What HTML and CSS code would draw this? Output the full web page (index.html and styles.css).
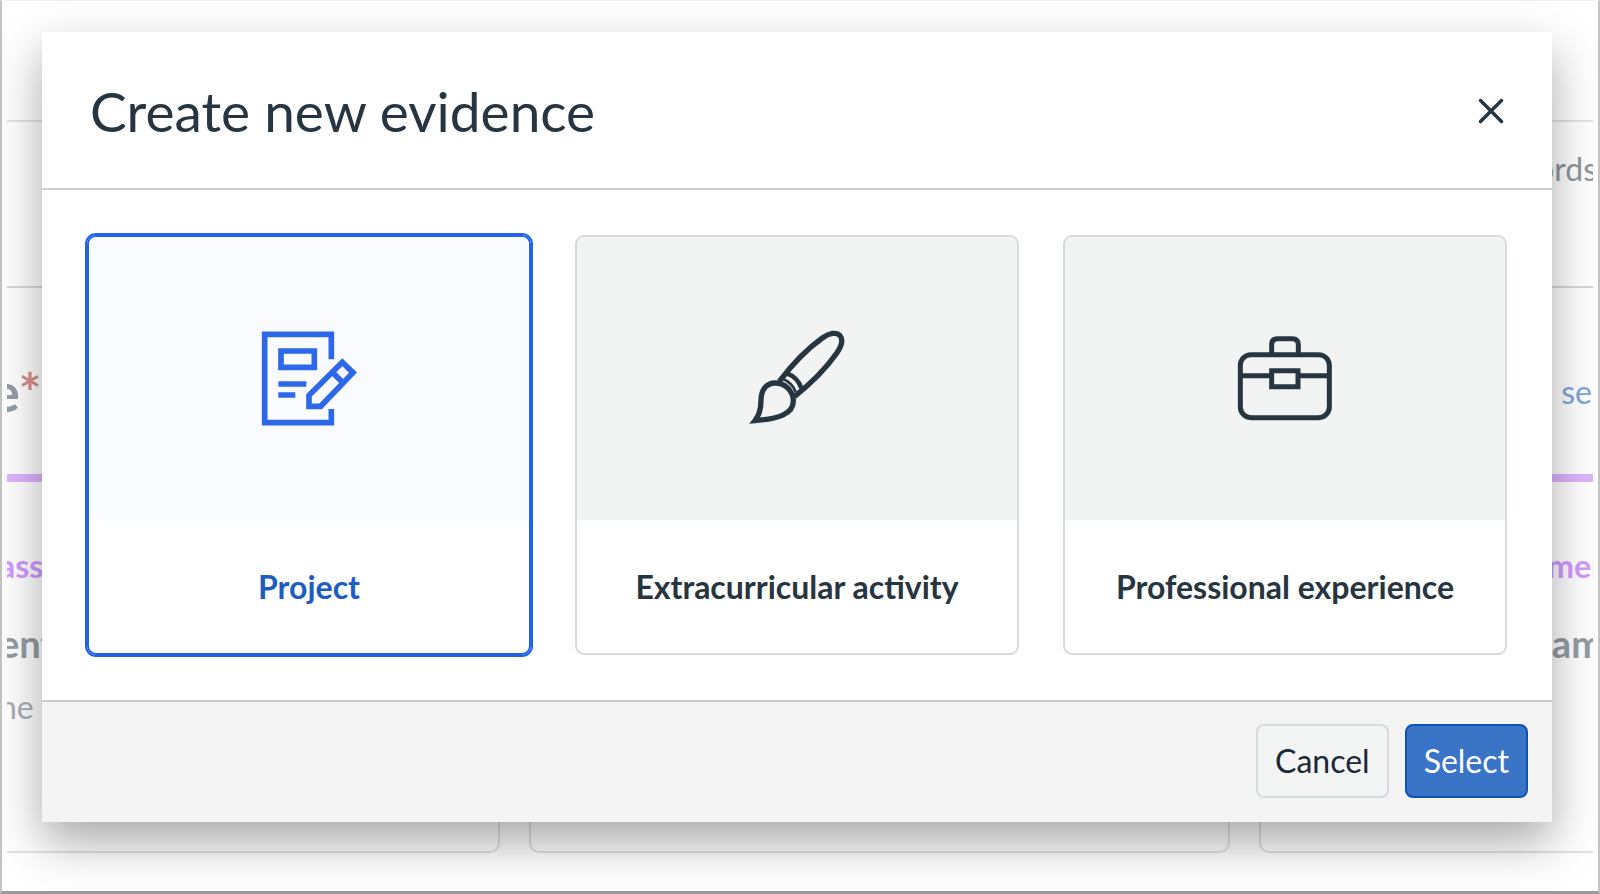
FILE: index.html
```
<!DOCTYPE html>
<html lang="en">
<head>
  <meta charset="UTF-8">
  <meta name="viewport" content="width=device-width, initial-scale=1.0">
  <title>Create new evidence</title>
  <link rel="stylesheet" href="styles.css">
</head>
<body>
  <div class="frame">
    <div class="page" aria-hidden="true">
      <div class="topbar"></div>
      <div class="toolbar">
        <span class="page-text">ords</span>
      </div>
      <div class="page-title">
        <span class="page-heading">e<span class="required">*</span></span>
        <span class="page-link">se</span>
      </div>
      <div class="page-cards">
        <div class="page-card first">
          <span class="tag">ass</span>
          <span class="name">ent</span>
          <span class="note">ne</span>
        </div>
        <div class="page-card"></div>
        <div class="page-card last">
          <span class="tag">mer</span>
          <span class="name">am</span>
        </div>
      </div>
    </div>
  </div>

  <div class="overlay">
    <form class="modal" role="dialog" aria-labelledby="modal-title">
      <header class="modal-header">
        <h1 id="modal-title">Create new evidence</h1>
        <button type="button" class="close" aria-label="Close">
          <svg viewBox="0 0 56 56"><path d="M7 7l42 42M49 7L7 49"/></svg>
        </button>
      </header>

      <div class="options">
        <input type="radio" name="evidence" id="project" checked>
        <label class="option" for="project">
          <span class="option-icon">
            <svg viewBox="59 56 300 300">
              <g stroke-width="17">
                <path d="M276 147V72H76v265h200v-41"/>
                <path d="M125 122h100v49H125zM117 221h84M117 254h51"/>
                <path d="M309 156l32 31-97 101h-35v-33zM279 186l32 31"/>
              </g>
            </svg>
          </span>
          <span class="option-name">Project</span>
        </label>

        <input type="radio" name="evidence" id="activity">
        <label class="option" for="activity">
          <span class="option-icon">
            <svg viewBox="51 56 300 300">
              <g stroke-width="16">
                <path d="M148 213C190 158 235 113 277 83C298 68 319 64 330 76C340 88 335 107 320 129C288 174 240 222 194 258"/>
                <path d="M172 190c20 7 34 21 42 43" stroke-width="14"/>
                <path d="M160 206c16 7 30 20 37 39" stroke-width="8"/>
                <path d="M75 331c14-18 18-35 18-61c0-32 17-52 42-52c30 0 55 23 55 54c0 40-46 53-115 59z"/>
              </g>
            </svg>
          </span>
          <span class="option-name">Extracurricular activity</span>
        </label>

        <input type="radio" name="evidence" id="experience">
        <label class="option" for="experience">
          <span class="option-icon">
            <svg viewBox="59 56 300 300">
              <g stroke-width="15">
                <rect x="75" y="133" width="267" height="189" rx="32"/>
                <path d="M169 133v-30q0-18 18-18h44q18 0 18 18v30"/>
                <path d="M74 196h95M249 196h93M169 181h79v48h-79z"/>
              </g>
            </svg>
          </span>
          <span class="option-name">Professional experience</span>
        </label>
      </div>

      <footer class="modal-footer">
        <button type="button" class="btn">Cancel</button>
        <button type="submit" class="btn btn-primary">Select</button>
      </footer>
    </form>
  </div>
</body>
</html>
```

FILE: styles.css
```
* {
  margin: 0;
  padding: 0;
  box-sizing: border-box;
}

body {
  position: relative;
  min-height: 100vh;
  font-family: Lato, "Liberation Sans", sans-serif;
  font-size: 32px;
  line-height: 40px;
  color: #273540;
  background: #fff;
}

/* page behind the dialog */
.frame {
  height: 100vh;
  min-height: 892px;
  padding: 0 5px;
  border: solid #c4c4c4;
  border-width: 1px 2px 3px;
  border-top-color: #f2f2f2;
  border-bottom-color: #9a9a9a;
}

.page {
  overflow: hidden;
}

.topbar {
  height: 121px;
  border-bottom: 2px solid #e2e4e6;
}

.toolbar {
  display: flex;
  justify-content: flex-end;
  height: 166px;
  padding-top: 27px;
  margin-right: -4px;
  border-bottom: 2px solid #d8d8d8;
  color: #8d949b;
}

.page-title {
  display: flex;
  justify-content: space-between;
  align-items: center;
  height: 186px;
  margin-left: -16px;
  padding: 22px 1px 0 0;
}

.page-heading {
  font-size: 54px;
  font-weight: bold;
  color: #959ca5;
}

.required {
  color: #d98e8a;
}

.page-link {
  color: #7ea5dc;
}

.page-cards {
  display: grid;
  grid-template-columns: 493fr 702fr 334fr;
  gap: 29px;
  border-top: 8px solid #deb4ff;
}

.page-card {
  display: flex;
  flex-direction: column;
  height: 371px;
  padding-top: 64px;
  border: solid #dfe2e4;
  border-width: 0 2px 2px;
  border-radius: 0 0 10px 10px;
}

.page-card.first {
  border-left: none;
  border-bottom-left-radius: 0;
}

.page-card.last {
  align-items: flex-end;
  border-right: none;
  border-bottom-right-radius: 0;
}

.first span {
  margin-left: -8px;
}

.last span {
  margin-right: -10px;
}

.tag {
  font-weight: bold;
  color: #d29aff;
}

.name {
  margin-top: 37px;
  font-size: 38px;
  font-weight: bold;
  color: #959ca5;
}

.note {
  margin-top: 24px;
  color: #a8aeb4;
}

/* dialog */
.overlay {
  position: absolute;
  top: 0;
  left: 0;
  right: 0;
  padding: 32px 48px 0 42px;
}

.modal {
  background: #fff;
  box-shadow: 0 20px 44px rgba(0, 0, 0, .34);
}

.modal-header {
  display: flex;
  justify-content: space-between;
  align-items: center;
  height: 158px;
  padding: 1px 47px 0 48px;
  border-bottom: 2px solid #c7cdd1;
}

.modal-header h1 {
  font-size: 55px;
  font-weight: normal;
  line-height: 64px;
}

.close {
  width: 28px;
  height: 28px;
  border: none;
  background: none;
  color: #273540;
  cursor: pointer;
}

svg {
  display: block;
  width: 100%;
  fill: none;
  stroke: currentColor;
}

.close svg {
  stroke-width: 7;
  stroke-linecap: round;
}

.options {
  position: relative;
  display: grid;
  grid-template-columns: repeat(3, 1fr);
  gap: 44px;
  padding: 45px;
  border-bottom: 2px solid #c7cdd1;
}

.options input {
  position: absolute;
  opacity: 0;
}

.option {
  overflow: hidden;
  border: 2px solid #d7dade;
  border-radius: 9px;
  font-weight: bold;
  text-align: center;
  cursor: pointer;
}

.option-icon {
  display: flex;
  justify-content: center;
  align-items: center;
  height: 283px;
  background: #f2f4f4;
}

.option-icon svg {
  width: 100px;
}

.option-name {
  display: block;
  padding: 47px 8px 46px;
}

input:checked + .option {
  border-color: #2062e8;
  box-shadow: 0 0 0 2px #2062e8;
  color: #1d5cc0;
}

input:checked + .option .option-icon {
  background: #fafbff;
  color: #2d68ea;
}

.modal-footer {
  display: flex;
  justify-content: flex-end;
  gap: 16px;
  padding: 22px 24px 24px;
  background: #f4f4f4;
}

.btn {
  height: 74px;
  padding: 0 17px;
  border: 2px solid #d7dade;
  border-radius: 8px;
  background: #f3f5f5;
  color: #1b2838;
  font: inherit;
  cursor: pointer;
}

.btn-primary {
  border-color: #0d53bc;
  background: #3a74c6;
  color: #fff;
}
```
